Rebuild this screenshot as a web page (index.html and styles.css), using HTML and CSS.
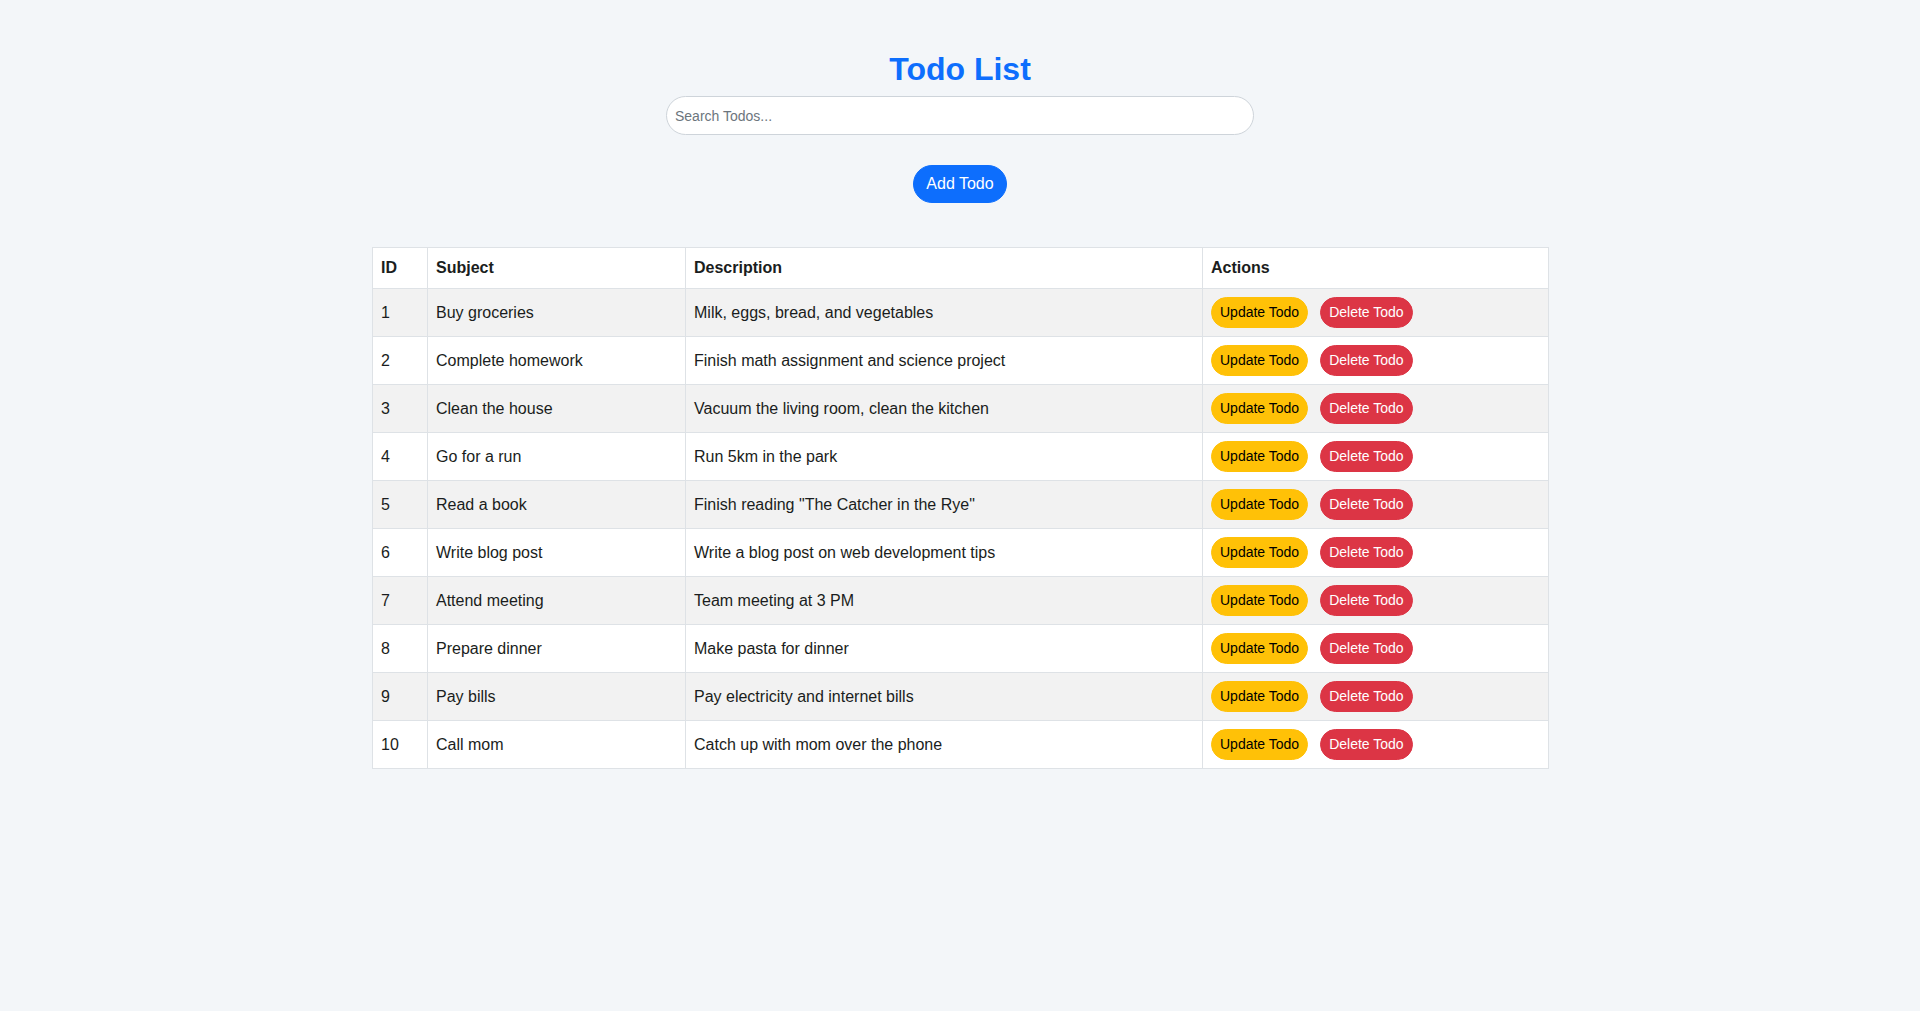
FILE: index.html
```html
<!DOCTYPE html>
<html lang="en">
<head>
<meta charset="utf-8">
<title>Todo List</title>
<link rel="stylesheet" href="styles.css">
</head>
<body>
<div class="container">
  <h1 class="title">Todo List</h1>
  <input class="search" type="text" placeholder="Search Todos...">
  <div class="add-wrap"><button class="btn btn-primary">Add Todo</button></div>
  <table class="todo-table">
    <colgroup>
      <col class="c-id"><col class="c-subject"><col class="c-desc"><col class="c-actions">
    </colgroup>
    <thead>
      <tr><th>ID</th><th>Subject</th><th>Description</th><th>Actions</th></tr>
    </thead>
    <tbody>
      <tr><td>1</td><td>Buy groceries</td><td>Milk, eggs, bread, and vegetables</td><td><div class="actions"><button class="btn-sm btn-warning">Update Todo</button><button class="btn-sm btn-danger">Delete Todo</button></div></td></tr>
      <tr><td>2</td><td>Complete homework</td><td>Finish math assignment and science project</td><td><div class="actions"><button class="btn-sm btn-warning">Update Todo</button><button class="btn-sm btn-danger">Delete Todo</button></div></td></tr>
      <tr><td>3</td><td>Clean the house</td><td>Vacuum the living room, clean the kitchen</td><td><div class="actions"><button class="btn-sm btn-warning">Update Todo</button><button class="btn-sm btn-danger">Delete Todo</button></div></td></tr>
      <tr><td>4</td><td>Go for a run</td><td>Run 5km in the park</td><td><div class="actions"><button class="btn-sm btn-warning">Update Todo</button><button class="btn-sm btn-danger">Delete Todo</button></div></td></tr>
      <tr><td>5</td><td>Read a book</td><td>Finish reading "The Catcher in the Rye"</td><td><div class="actions"><button class="btn-sm btn-warning">Update Todo</button><button class="btn-sm btn-danger">Delete Todo</button></div></td></tr>
      <tr><td>6</td><td>Write blog post</td><td>Write a blog post on web development tips</td><td><div class="actions"><button class="btn-sm btn-warning">Update Todo</button><button class="btn-sm btn-danger">Delete Todo</button></div></td></tr>
      <tr><td>7</td><td>Attend meeting</td><td>Team meeting at 3 PM</td><td><div class="actions"><button class="btn-sm btn-warning">Update Todo</button><button class="btn-sm btn-danger">Delete Todo</button></div></td></tr>
      <tr><td>8</td><td>Prepare dinner</td><td>Make pasta for dinner</td><td><div class="actions"><button class="btn-sm btn-warning">Update Todo</button><button class="btn-sm btn-danger">Delete Todo</button></div></td></tr>
      <tr><td>9</td><td>Pay bills</td><td>Pay electricity and internet bills</td><td><div class="actions"><button class="btn-sm btn-warning">Update Todo</button><button class="btn-sm btn-danger">Delete Todo</button></div></td></tr>
      <tr><td>10</td><td>Call mom</td><td>Catch up with mom over the phone</td><td><div class="actions"><button class="btn-sm btn-warning">Update Todo</button><button class="btn-sm btn-danger">Delete Todo</button></div></td></tr>
    </tbody>
  </table>
</div>
</body>
</html>
```

FILE: styles.css
```css
* { box-sizing: border-box; }

html, body {
  margin: 0;
  padding: 0;
}

body {
  background: #f3f6f9;
  font-family: "Liberation Sans", Arial, sans-serif;
  font-size: 16px;
  line-height: 1.5;
  color: #1a1d20;
  min-height: 1011px;
}

.container {
  max-width: 1200px;
  margin: 0 auto;
  padding: 50px 12px 0;
}

.title {
  margin: 0 0 8px;
  font-size: 32px;
  line-height: 1.2;
  font-weight: 700;
  color: #0d6efd;
  text-align: center;
}

.search {
  display: block;
  width: 50%;
  height: 39px;
  margin: 0 auto 30px;
  padding: 0 8px;
  font-family: "Liberation Sans", Arial, sans-serif;
  font-size: 14px;
  color: #212529;
  background: #fff;
  border: 1px solid #ced4da;
  border-radius: 20px;
  outline: none;
}

.search::placeholder {
  color: #6c757d;
}

.add-wrap {
  display: flex;
  justify-content: center;
  margin-bottom: 44px;
}

.btn {
  font-family: "Liberation Sans", Arial, sans-serif;
  font-size: 16px;
  line-height: 1.5;
  padding: 6px 12px;
  border: 1px solid transparent;
  border-radius: 19px;
  cursor: pointer;
}

.btn-primary {
  background: #0d6efd;
  border-color: #0d6efd;
  color: #fff;
}

.todo-table {
  width: 100%;
  border-collapse: collapse;
  table-layout: fixed;
  background: #fff;
  border: 1px solid #dee2e6;
}

.c-id { width: 55px; }
.c-subject { width: 258px; }
.c-desc { width: 517px; }
.c-actions { width: 346px; }

.todo-table th,
.todo-table td {
  padding: 8px;
  text-align: left;
  border: 1px solid #dee2e6;
  vertical-align: middle;
}

.todo-table th {
  font-weight: 700;
  background: #fff;
}

.todo-table tbody tr:nth-child(odd) td {
  background: #f2f2f2;
}

.actions {
  display: flex;
  gap: 12px;
  align-items: center;
}

.btn-sm {
  font-family: "Liberation Sans", Arial, sans-serif;
  font-size: 14px;
  line-height: 1.5;
  padding: 4px 8px;
  border: 1px solid transparent;
  border-radius: 16px;
  cursor: pointer;
}

.btn-warning {
  background: #ffc107;
  border-color: #ffc107;
  color: #000;
}

.btn-danger {
  background: #dc3545;
  border-color: #dc3545;
  color: #fff;
}
```
